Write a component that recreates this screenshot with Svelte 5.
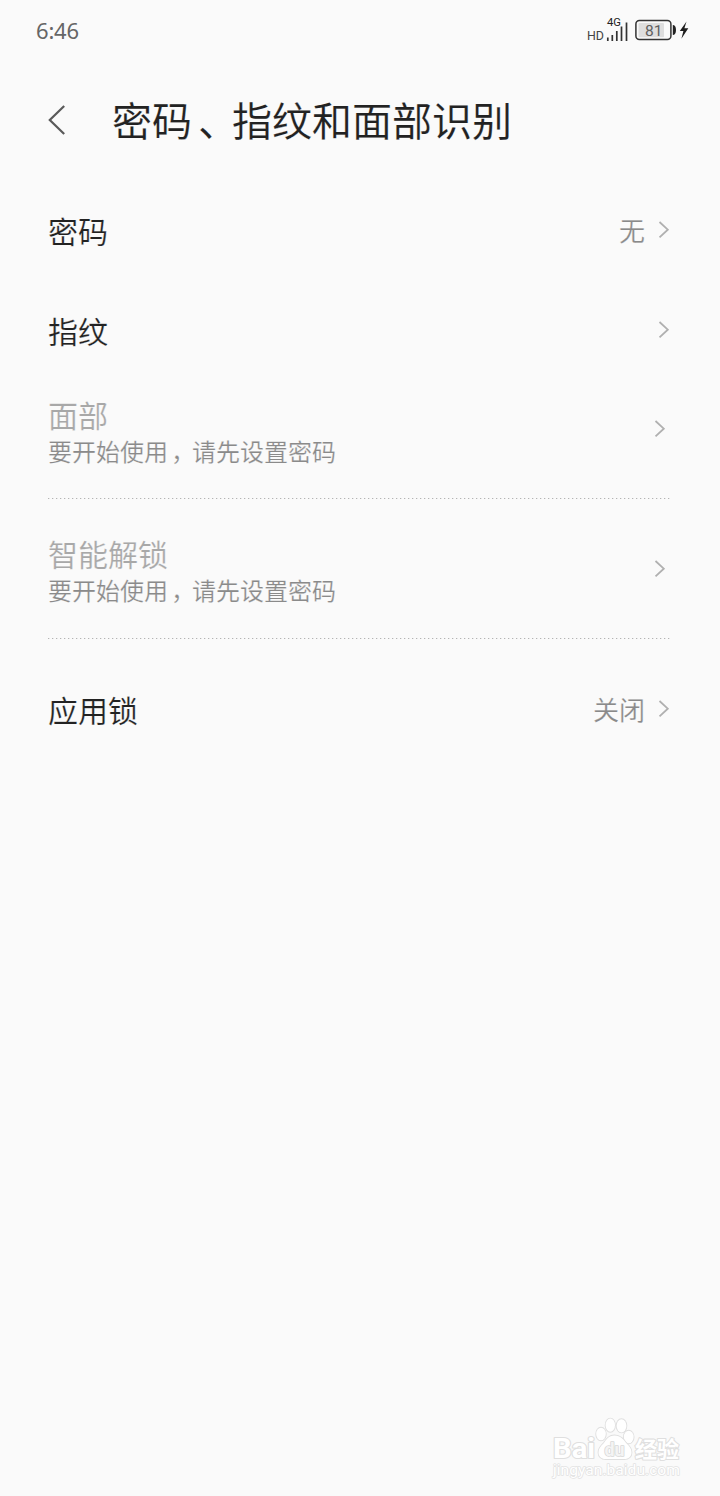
<script>
  const rows = [
    { label: '密码', value: '无' },
    { label: '指纹' },
    { label: '面部', note: ['要开始使用', '请先设置密码'] },
    { label: '智能解锁', note: ['要开始使用', '请先设置密码'] },
    { label: '应用锁', value: '关闭', spaced: true }
  ];
</script>

<div class="screen">
  <header class="status">
    <span class="time">6:46</span>
    <svg class="icons" width="104" height="32" viewBox="586 14 104 32">
      <text x="587" y="40" font-size="12.5" textLength="17" lengthAdjust="spacingAndGlyphs" fill="#444">HD</text>
      <text x="607" y="26" font-size="10.5" textLength="14" lengthAdjust="spacingAndGlyphs" fill="#222">4G</text>
      <path d="M607.800 37.500v3.500M612.300 35v6M616.800 31v10M621.500 26.500v14.500M626.500 22.500v18.500" stroke="#333" stroke-width="1.700" />
      <rect x="635.900" y="20.600" width="35" height="19" rx="3.500" fill="#fafafa" stroke="#333" stroke-width="1.500" />
      <rect x="638.500" y="23" width="25.500" height="14.300" rx="1" fill="#dedede" />
      <path d="M672.800 25c2 0 3.200 1.500 3.200 5s-1.200 5-3.200 5z" fill="#222" />
      <text x="645" y="36" font-size="15.500" textLength="17.500" lengthAdjust="spacingAndGlyphs" fill="#606060">81</text>
      <path d="M686.500 21.500l-6.700 9.500h3.600l-2 7.700 6.900-10.400h-3.900z" fill="#1e1e1e" />
    </svg>
  </header>

  <div class="titlebar">
    <svg class="back" width="20" height="32" viewBox="0 0 20 32">
      <path d="M17.200 2L2.800 16l14.400 14" fill="none" stroke="#5a5a5a" stroke-width="2.200" />
    </svg>
    <h1>密码<span class="pause">、</span>指纹和面部识别</h1>
  </div>

  <main>
    {#each rows as row}
      <div class="row" class:disabled={row.note} class:spaced={row.spaced}>
        <div class="text">
          <div class="label">{row.label}</div>
          {#if row.note}<div class="note">{row.note[0]}<span class="comma">，</span>{row.note[1]}</div>{/if}
        </div>
        {#if row.value}<span class="value">{row.value}</span>{/if}
        <svg class="chevron" width="12" height="18" viewBox="0 0 12 18">
          <path d="M1.500 1L9.800 8.700l-8.300 7.700" fill="none" stroke="#b0b0b0" stroke-width="1.800" />
        </svg>
      </div>
      {#if row.note}<div class="divider"></div>{/if}
    {/each}
  </main>

  <footer>
    <svg width="140" height="66" viewBox="548 1416 140 66">
      <g fill="#fff" stroke="#dfdfdf" stroke-width="2.200" paint-order="stroke" stroke-linejoin="round">
        <text x="553" y="1457.500" font-size="27" font-weight="700" textLength="42" lengthAdjust="spacingAndGlyphs">Bai</text>
        <g stroke-width="1.800">
          <ellipse cx="601" cy="1434" rx="4.800" ry="6.300" />
          <ellipse cx="610.300" cy="1425.200" rx="4.700" ry="6.600" />
          <ellipse cx="621.500" cy="1425.800" rx="4.900" ry="6.600" />
          <ellipse cx="628.700" cy="1437" rx="4.900" ry="6.300" />
          <path d="M614.500 1435.500c-6 0-8 4-11 8-3 3-5 5-5 9 0 4 3 6.500 7 6.500h19c4 0 7-2.500 7-6.500 0-4-2-6-5-9-3-4-6-8-12-8z" />
        </g>
        <text x="604.500" y="1455.500" font-size="18" font-weight="700" textLength="20" lengthAdjust="spacingAndGlyphs" fill="#f4f4f4" stroke="#d8d8d8" stroke-width="1.600">du</text>
        <text x="635" y="1456.500" font-size="22" font-weight="700" class="cjk">经验</text>
        <text x="553" y="1475" font-size="15" textLength="127" lengthAdjust="spacingAndGlyphs" stroke-width="1.500" stroke="#e2e2e2">jingyan.baidu.com</text>
      </g>
    </svg>
  </footer>
</div>

<style>
  :global(body) { background: #fafafa; }
  .screen {
    width: 720px;
    height: 1496px;
    box-sizing: border-box;
    display: flex;
    flex-direction: column;
    background: #fafafa;
    color: #222;
    font-family: Roboto, "Noto Sans CJK SC", sans-serif;
  }
  .status {
    height: 60px;
    padding: 0 30px 0 36px;
    display: flex;
    align-items: center;
    justify-content: space-between;
  }
  .time { font: 22px/30px "Noto Sans", sans-serif; letter-spacing: -0.2px; color: #666; }
  .titlebar {
    height: 120px;
    padding-left: 47px;
    display: flex;
    align-items: center;
    gap: 45px;
  }
  h1 {
    margin: 0;
    padding-bottom: 2px;
    font: 400 40px/60px "Noto Sans CJK SC", sans-serif;
    -webkit-text-stroke: 0.15px #fafafa;
  }
  .pause { display: inline-block; width: 20px; margin: 0 14px 0 6px; font-feature-settings: "halt"; }
  .comma { display: inline-block; width: 12px; margin: 0 9px 0 3px; font-feature-settings: "halt"; }
  main { flex: 1; }
  .row {
    height: 100px;
    box-sizing: border-box;
    padding: 0 50px 0 48px;
    display: flex;
    align-items: center;
    font-family: "Noto Sans CJK SC", sans-serif;
    -webkit-text-stroke: 0.2px #fafafa;
  }
  .text { flex: 1; }
  .label { font-size: 30px; line-height: 40px; }
  .value { font-size: 26px; line-height: 40px; color: #8a8a8a; margin-right: 13px; }
  .disabled { height: 139px; padding-right: 54px; }
  .disabled:nth-child(3) { height: 118px; padding-bottom: 20px; }
  .disabled .text { padding: 5px 0 0; }
  .disabled .label { color: #a8a8a8; line-height: 38px; }
  .note { font-size: 24px; line-height: 36px; color: #8a8a8a; }
  .divider {
    height: 1px;
    margin: 0 50px 0 48px;
    background: repeating-linear-gradient(90deg, #b4b4b4 0 1px, #e6e6e6 1px 2px, transparent 2px 4px);
  }
  .spaced { margin-top: 20px; }
  footer { padding: 0 32px 14px; display: flex; justify-content: flex-end; }
</style>
